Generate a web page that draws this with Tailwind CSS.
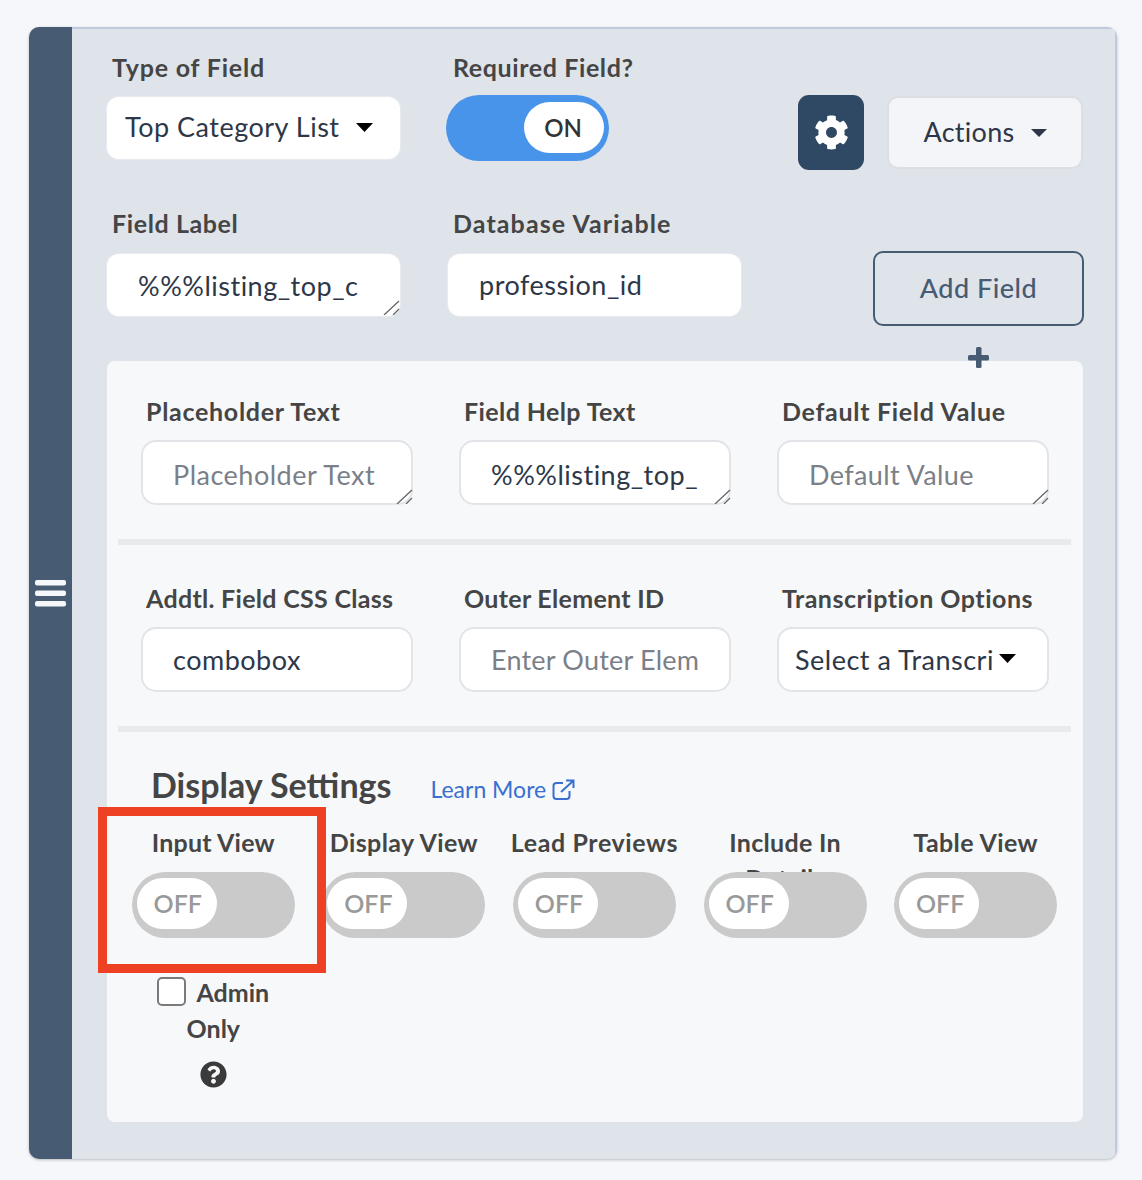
<!DOCTYPE html>
<html lang="en">
<head>
  <meta charset="UTF-8">
  <title>Field Settings</title>
  <script src="https://cdn.jsdelivr.net/npm/@tailwindcss/browser@4"></script>
</head>
<body class="bg-[#f5f7fa] font-['Lato','Noto_Sans',sans-serif] text-[#2d3748]">

  <div class="relative w-[1142px] h-[1180px] pt-[27px] pl-[29px]">
    <!-- panel -->
    <div class="flex w-[1088px] h-[1132px] rounded-[10px] overflow-hidden shadow-[0_1px_3px_rgba(0,0,0,0.25)] bg-[#dfe3ea]">
      <!-- drag handle -->
      <div class="w-[43px] bg-[#475b73] flex items-center justify-center shrink-0">
        <svg class="w-[31px] h-[27px]" viewBox="0 0 31 27" fill="#f5f7fa">
          <rect y="0" width="31" height="5.5" rx="2"/>
          <rect y="10.5" width="31" height="5.5" rx="2"/>
          <rect y="21" width="31" height="5.5" rx="2"/>
        </svg>
      </div>

      <div class="flex-1 pl-[35px] pr-[30px] pt-[23px] border-t-2 border-r-2 border-[#bfcbdd]">
        <!-- first row -->
        <div class="flex h-[147px]">
          <div class="w-[293px]">
            <div class="text-[25px] leading-[30px] font-bold text-[#454545] pl-[5px] tracking-[0.8px]">Type of Field</div>
            <div class="mt-[15px] h-[62px] pb-[1px] bg-white rounded-[12px] flex items-center pl-[18px] text-[27px] tracking-[0.5px] shadow-[0_0_0_1px_#e8eaee] whitespace-nowrap">
              Top Category List
              <svg class="ml-[16px] w-[17px] h-[9px]" viewBox="0 0 17 9"><path d="M0 0h17L8.500 9z" fill="#000"/></svg>
            </div>
          </div>
          <div class="w-[398px] pl-[46px]">
            <div class="text-[25px] leading-[30px] font-bold text-[#454545] pl-[7px] tracking-[0.6px]">Required Field?</div>
            <div class="mt-[13px] w-[163px] h-[66px] rounded-full bg-[#4894ea] flex items-center justify-end pr-[5px]">
              <div class="w-[80px] h-[51px] mb-[1px] pr-[2px] rounded-full bg-white flex items-center justify-center text-[24px] font-semibold text-[#333]">ON</div>
            </div>
          </div>
          <div class="pt-[43px] flex items-start">
            <div class="w-[66px] h-[75px] rounded-[11px] bg-[#2f4864] flex items-center justify-center">
              <svg class="w-[35px] h-[35px]" viewBox="0 0 512 512" fill="#fff"><path d="M487.4 315.700l-42.600-24.600c4.300-23.200 4.300-47 0-70.200l42.600-24.600c4.900-2.800 7.100-8.600 5.500-14-11.100-35.600-30-67.800-54.700-94.600-3.800-4.100-10-5.100-14.800-2.300L380.800 110c-17.900-15.400-38.500-27.300-60.800-35.100V25.800c0-5.600-3.900-10.500-9.400-11.700-36.700-8.200-74.300-7.800-109.200 0-5.500 1.200-9.400 6.100-9.400 11.700V75c-22.200 7.900-42.800 19.800-60.800 35.100L88.700 85.500c-4.900-2.800-11-1.900-14.800 2.300-24.700 26.700-43.600 58.900-54.700 94.600-1.700 5.400.6 11.200 5.500 14L67.300 221c-4.300 23.200-4.300 47 0 70.200l-42.600 24.600c-4.900 2.800-7.100 8.600-5.500 14 11.100 35.600 30 67.800 54.700 94.600 3.800 4.100 10 5.100 14.800 2.300l42.600-24.600c17.900 15.400 38.500 27.300 60.800 35.100v49.200c0 5.600 3.900 10.500 9.400 11.700 36.700 8.200 74.300 7.800 109.200 0 5.500-1.200 9.400-6.100 9.400-11.700v-49.200c22.200-7.900 42.800-19.800 60.800-35.100l42.600 24.600c4.900 2.800 11 1.900 14.800-2.300 24.700-26.700 43.600-58.900 54.700-94.600 1.500-5.500-.7-11.300-5.600-14.100zM256 336c-44.100 0-80-35.900-80-80s35.900-80 80-80 80 35.900 80 80-35.900 80-80 80z"/></svg>
            </div>
            <div class="ml-[23px] mt-[1px] w-[196px] h-[73px] rounded-[11px] bg-[#f3f5f9] border-2 border-[#dcdee2] flex items-center justify-center text-[27px] tracking-[0.3px] text-[#2d3748]">
              Actions
              <svg class="ml-[16px] w-[16px] h-[8px]" viewBox="0 0 16 8"><path d="M0 0h16L8 8z" fill="#2d3748"/></svg>
            </div>
          </div>
        </div>

        <!-- second row -->
        <div class="flex h-[153px] mt-[9px]">
          <div class="w-[293px]">
            <div class="text-[25px] leading-[30px] font-bold text-[#454545] pl-[5px] tracking-[0.6px]">Field Label</div>
            <div class="relative mt-[16px]">
              <textarea rows="1" readonly class="block w-[293px] h-[62px] resize-none bg-white rounded-[12px] pl-[31px] pt-[15px] text-[27px] tracking-[0.5px] leading-[33px] shadow-[0_0_0_1px_#e8eaee] overflow-hidden outline-none">%%%listing_top_c</textarea>
              <svg class="absolute right-0 bottom-[1px] w-[17px] h-[15px]" viewBox="0 0 17 15" fill="none" stroke="#666" stroke-width="1.300"><path d="M1 15L16 1M10 15L16 9"/></svg>
            </div>
          </div>
          <div class="w-[293px] ml-[48px]">
            <div class="text-[25px] leading-[30px] font-bold text-[#454545] pl-[5px] tracking-[1.1px] whitespace-nowrap">Database Variable</div>
            <div class="mt-[16px] h-[62px] bg-white rounded-[12px] flex items-center pl-[31px] text-[27px] tracking-[0.5px] shadow-[0_0_0_1px_#e8eaee]">profession_id</div>
          </div>
          <div class="ml-[132px] pt-[43px] relative">
            <div class="w-[211px] h-[75px] rounded-[10px] border-2 border-[#475b73] flex items-center justify-center text-[27px] tracking-[0.5px] font-medium text-[#475b73]">Add Field</div>
            <svg class="absolute left-[95px] top-[139px] w-[21px] h-[21px]" viewBox="0 0 21 21" fill="#475b73"><rect x="8" width="5.500" height="21" rx="1.500"/><rect y="8" width="21" height="5.500" rx="1.500"/></svg>
          </div>
        </div>

        <!-- card -->
        <div class="w-[976px] h-[761px] bg-[#f7f8fa] rounded-[8px] px-[11px] pt-[35px]">
          <div class="grid grid-cols-[272px_272px_272px] gap-x-[46px] pl-[23px]">
            <div>
              <div class="text-[25px] leading-[30px] font-bold text-[#454545] pl-[5px] tracking-[0.7px]">Placeholder Text</div>
              <div class="relative mt-[14px]">
                <textarea rows="1" readonly placeholder="Placeholder Text" class="block w-[272px] h-[65px] resize-none bg-white rounded-[15px] border-2 border-[#e2e4e8] pl-[30px] pt-[16px] text-[27px] tracking-[0.5px] leading-[33px] overflow-hidden outline-none placeholder:text-[#7b8088]"></textarea>
                <svg class="absolute right-0 bottom-[1px] w-[17px] h-[15px]" viewBox="0 0 17 15" fill="none" stroke="#666" stroke-width="1.300"><path d="M1 15L16 1M10 15L16 9"/></svg>
              </div>
            </div>
            <div>
              <div class="text-[25px] leading-[30px] font-bold text-[#454545] pl-[5px] tracking-[0.4px]">Field Help Text</div>
              <div class="relative mt-[14px]">
                <textarea rows="1" readonly class="block w-[272px] h-[65px] resize-none bg-white rounded-[15px] border-2 border-[#e2e4e8] pl-[30px] pt-[16px] text-[27px] tracking-[0.5px] leading-[33px] overflow-hidden outline-none">%%%listing_top_</textarea>
                <svg class="absolute right-0 bottom-[1px] w-[17px] h-[15px]" viewBox="0 0 17 15" fill="none" stroke="#666" stroke-width="1.300"><path d="M1 15L16 1M10 15L16 9"/></svg>
              </div>
            </div>
            <div>
              <div class="text-[25px] leading-[30px] font-bold text-[#454545] pl-[5px] tracking-[0.7px] whitespace-nowrap">Default Field Value</div>
              <div class="relative mt-[14px]">
                <textarea rows="1" readonly placeholder="Default Value" class="block w-[272px] h-[65px] resize-none bg-white rounded-[15px] border-2 border-[#e2e4e8] pl-[30px] pt-[16px] text-[27px] tracking-[0.4px] leading-[33px] overflow-hidden outline-none placeholder:text-[#7b8088]"></textarea>
                <svg class="absolute right-0 bottom-[1px] w-[17px] h-[15px]" viewBox="0 0 17 15" fill="none" stroke="#666" stroke-width="1.300"><path d="M1 15L16 1M10 15L16 9"/></svg>
              </div>
            </div>
          </div>

          <div class="h-[6px] bg-[#e8eaed] mt-[34px] w-[953px]"></div>

          <div class="grid grid-cols-[272px_272px_272px] gap-x-[46px] pl-[23px] mt-[38px]">
            <div>
              <div class="text-[25px] leading-[30px] font-bold text-[#454545] pl-[5px] tracking-[0.3px] whitespace-nowrap">Addtl. Field CSS Class</div>
              <div class="mt-[14px] h-[65px] pt-[1px] bg-white rounded-[15px] border-2 border-[#e2e4e8] flex items-center pl-[30px] text-[27px] tracking-[0.5px]">combobox</div>
            </div>
            <div>
              <div class="text-[25px] leading-[30px] font-bold text-[#454545] pl-[5px] tracking-[0.3px]">Outer Element ID</div>
              <div class="mt-[14px] h-[65px] pt-[1px] bg-white rounded-[15px] border-2 border-[#e2e4e8] flex items-center pl-[30px] text-[27px] tracking-[0.2px] text-[#7b8088] whitespace-nowrap">Enter Outer Elem</div>
            </div>
            <div>
              <div class="text-[25px] leading-[30px] font-bold text-[#454545] pl-[5px] tracking-[0.5px] whitespace-nowrap">Transcription Options</div>
              <div class="mt-[14px] h-[65px] pt-[1px] bg-white rounded-[15px] border-2 border-[#e2e4e8] flex items-center pl-[16px] text-[27px] tracking-[0.5px] whitespace-nowrap">
                Select a Transcri
                <svg class="ml-[5px] mb-[3px] w-[17px] h-[9px]" viewBox="0 0 17 9"><path d="M0 0h17L8.500 9z" fill="#000"/></svg>
              </div>
            </div>
          </div>

          <div class="h-[6px] bg-[#e8eaed] mt-[34px] w-[953px]"></div>

          <!-- display settings -->
          <div class="flex items-baseline pl-[33px] mt-[33px]">
            <div class="text-[34px] leading-[40px] font-bold text-[#454545]">Display Settings</div>
            <div class="ml-[39px] text-[23px] text-[#3a6fd0] flex items-center">Learn More
              <svg class="ml-[6px] w-[23px] h-[21px]" viewBox="0 0 23 21" fill="none" stroke="#3a6fd0" stroke-width="2"><path d="M11 4H4.500A3 3 0 0 0 1.500 7v10a3 3 0 0 0 3 3h10a3 3 0 0 0 3-3v-5"/><path d="M9 13L21 2M14 1.500h7.500V9"/></svg>
            </div>
          </div>

          <div class="grid grid-cols-[repeat(5,190.6px)] mt-[20px]">
            <div class="flex flex-col items-center">
              <div class="h-[30px] text-[25px] leading-[30px] font-bold text-[#454545] tracking-[0.2px]">Input View</div>
              <div class="mt-[15px] relative z-10 w-[163px] h-[66px] rounded-full bg-[#cacaca] flex items-center pl-[5px] text-[#999]">
                <div class="w-[80px] h-[51px] mb-[2px] pl-[2px] rounded-full bg-white flex items-center justify-center text-[25px] font-semibold">OFF</div>
              </div>
              <label class="mt-[36px] w-[130px] text-center text-[25px] leading-[36px] font-bold text-[#454545] flex flex-wrap justify-center items-center">
                <span class="w-[29px] h-[29px] rounded-[5px] border-2 border-[#7a7a7a] bg-white mr-[10px]"></span>Admin<span class="w-full">Only</span>
              </label>
              <svg class="mt-[15px] w-[27px] h-[27px]" viewBox="0 0 512 512" fill="#3a3a3a"><path d="M504 256c0 137-111 248-248 248S8 393 8 256 119 8 256 8s248 111 248 248zM262.700 90c-54.500 0-89.300 23-116.500 63.800-3.500 5.300-2.300 12.400 2.800 16.300l34.700 26.300c5.200 3.900 12.600 3 16.700-2.100 17.900-22.700 30.100-35.800 57.300-35.800 20.400 0 45.700 13.100 45.700 32.900 0 15-12.400 22.700-32.500 34C247.100 238.500 216 254.900 216 296v4c0 6.600 5.400 12 12 12h56c6.600 0 12-5.400 12-12v-1.300c0-28.500 83.200-29.700 83.200-106.700 0-58-60.200-102-116.500-102zM256 338c-25.400 0-46 20.600-46 46 0 25.400 20.600 46 46 46s46-20.600 46-46c0-25.400-20.600-46-46-46z"/></svg>
            </div>
            <div class="flex flex-col items-center">
              <div class="h-[30px] text-[25px] leading-[30px] font-bold text-[#454545] tracking-[0.4px] whitespace-nowrap">Display View</div>
              <div class="mt-[15px] relative z-10 w-[163px] h-[66px] rounded-full bg-[#cacaca] flex items-center pl-[5px] text-[#999]">
                <div class="w-[80px] h-[51px] mb-[2px] pl-[2px] rounded-full bg-white flex items-center justify-center text-[25px] font-semibold">OFF</div>
              </div>
            </div>
            <div class="flex flex-col items-center">
              <div class="h-[30px] text-[25px] leading-[30px] font-bold text-[#454545] tracking-[0.6px] whitespace-nowrap">Lead Previews</div>
              <div class="mt-[15px] relative z-10 w-[163px] h-[66px] rounded-full bg-[#cacaca] flex items-center pl-[5px] text-[#999]">
                <div class="w-[80px] h-[51px] mb-[2px] pl-[2px] rounded-full bg-white flex items-center justify-center text-[25px] font-semibold">OFF</div>
              </div>
            </div>
            <div class="flex flex-col items-center">
              <div class="h-[30px] text-[25px] leading-[36px] font-bold text-[#454545] tracking-[0.3px] text-center -translate-y-[3px]">Include In<br>Details</div>
              <div class="mt-[15px] relative z-10 w-[163px] h-[66px] rounded-full bg-[#cacaca] flex items-center pl-[5px] text-[#999]">
                <div class="w-[80px] h-[51px] mb-[2px] pl-[2px] rounded-full bg-white flex items-center justify-center text-[25px] font-semibold">OFF</div>
              </div>
            </div>
            <div class="flex flex-col items-center">
              <div class="h-[30px] text-[25px] leading-[30px] font-bold text-[#454545] tracking-[0.4px] whitespace-nowrap">Table View</div>
              <div class="mt-[15px] relative z-10 w-[163px] h-[66px] rounded-full bg-[#cacaca] flex items-center pl-[5px] text-[#999]">
                <div class="w-[80px] h-[51px] mb-[2px] pl-[2px] rounded-full bg-white flex items-center justify-center text-[25px] font-semibold">OFF</div>
              </div>
            </div>
          </div>
        </div>
      </div>
    </div>

    <!-- annotation -->
    <div class="absolute z-20 left-[98px] top-[807px] w-[228px] h-[166px] border-[9px] border-[#ee4023]"></div>
  </div>
</body>
</html>
